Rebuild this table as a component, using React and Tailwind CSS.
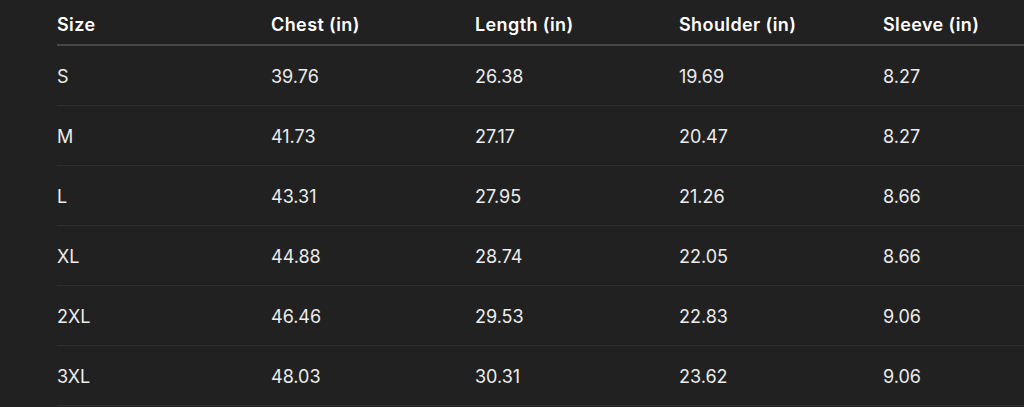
const HEADERS = ['Size', 'Chest (in)', 'Length (in)', 'Shoulder (in)', 'Sleeve (in)'];

const ROWS = [
  ['S', '39.76', '26.38', '19.69', '8.27'],
  ['M', '41.73', '27.17', '20.47', '8.27'],
  ['L', '43.31', '27.95', '21.26', '8.66'],
  ['XL', '44.88', '28.74', '22.05', '8.66'],
  ['2XL', '46.46', '29.53', '22.83', '9.06'],
  ['3XL', '48.03', '30.31', '23.62', '9.06'],
];

export default function App() {
  return (
    <div className="w-[1024px] h-[407px] overflow-hidden bg-[#212121] pl-[57px] font-['Inter','Liberation_Sans',sans-serif]">
      <table className="table-fixed w-[1030px] border-collapse text-left">
        <colgroup>
          <col className="w-[214px]" />
          <col className="w-[204px]" />
          <col className="w-[204px]" />
          <col className="w-[204px]" />
          <col className="w-[204px]" />
        </colgroup>
        <thead>
          <tr className="h-[45px] border-b-2 border-[#474747]">
            {HEADERS.map(h => (
              <th key={h} className="p-0 pt-[4px] text-[18px] font-semibold text-white tracking-[0.4px]">{h}</th>
            ))}
          </tr>
        </thead>
        <tbody>
          {ROWS.map(r => (
            <tr key={r[0]} className="h-[60px] border-b border-[#2e2e2e]">
              {r.map((c, i) => (
                <td key={i} className="p-0 pt-[2px] text-[18px] text-[#ececec]">{c}</td>
              ))}
            </tr>
          ))}
        </tbody>
      </table>
    </div>
  );
}
